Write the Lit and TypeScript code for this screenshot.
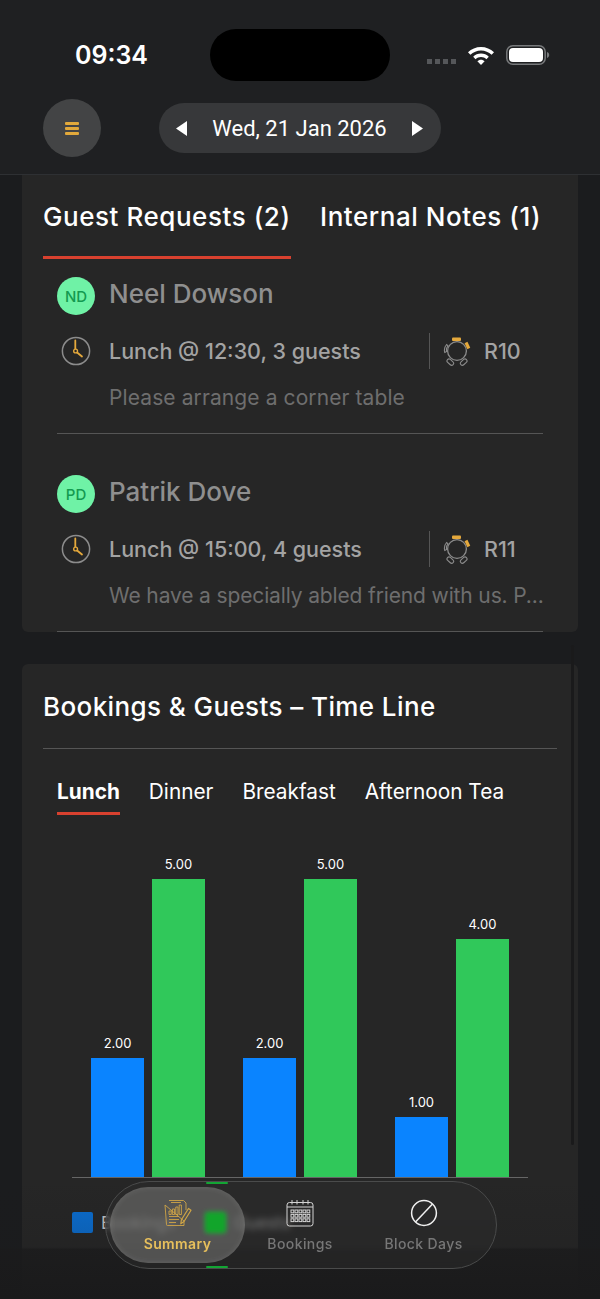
import { LitElement, html, css, svg } from 'lit';
import { customElement } from 'lit/decorators.js';

const requests = [
    { initials: 'ND', name: 'Neel Dowson', meal: 'Lunch @ 12:30, 3 guests', table: 'R10', note: 'Please arrange a corner table' },
    { initials: 'PD', name: 'Patrik Dove', meal: 'Lunch @ 15:00, 4 guests', table: 'R11', note: 'We have a specially abled friend with us. P...' },
];

const chart = [
    { bookings: 2, guests: 5 },
    { bookings: 2, guests: 5 },
    { bookings: 1, guests: 4 },
];

const unit = 59.6;

const clockIcon = svg`
    <svg width="30" height="30" viewBox="0 0 30 30" fill="none">
        <circle cx="15" cy="15" r="13.6" stroke="#8c8c8c" stroke-width="1.5"/>
        <path d="M14.3 4.5V15L21 20.5" stroke="#e5a93c" stroke-width="1.8" stroke-linecap="round"/>
        <circle cx="14.6" cy="15" r="1.9" stroke="#e5a93c" stroke-width="1.4" fill="#262626"/>
    </svg>`;

const tableIcon = svg`
    <svg width="28" height="30" viewBox="0 0 28 30" fill="none">
        <circle cx="14" cy="15" r="9.4" stroke="#8c8c8c" stroke-width="1.3"/>
        <rect x="9" y="1.5" width="9" height="3.4" rx="1" fill="#e5a93c"/>
        <path d="M23 6.5L25.8 12.5" stroke="#e5a93c" stroke-width="3.2"/>
        <path d="M3.6 8.5C1.4 11 1 14 1.8 16.5L3.6 15.5C3.2 13.5 3.6 11.5 5 9.8Z" stroke="#8c8c8c" stroke-width="1.1"/>
        <rect x="5.2" y="22.4" width="4" height="7.5" rx="2" transform="rotate(-48 7.2 26)" stroke="#8c8c8c" stroke-width="1.1"/>
        <rect x="18.8" y="22.4" width="4" height="7.5" rx="2" transform="rotate(48 20.8 26)" stroke="#8c8c8c" stroke-width="1.1"/>
    </svg>`;

const summaryIcon = svg`
    <svg width="28" height="28" viewBox="0 0 28 28" fill="none" stroke="#cfa547" stroke-width="0.9" stroke-linejoin="round">
        <path d="M5 1.5H19.5L22 4V11M20 22V26.5H3.5Q2.5 26.5 2.5 25.5L1 6Z"/>
        <path d="M7 3.5H17M5 17.5H15M5 20.5H15M5 23.5H12"/>
        <rect x="5" y="12" width="2.2" height="3.5"/>
        <rect x="8.4" y="10" width="2.2" height="5.5"/>
        <rect x="11.8" y="8" width="2.2" height="7.5"/>
        <rect x="15.2" y="6" width="2.2" height="9.5"/>
        <path d="M24.5 9.5L27 11.2L20 22.5L16.8 24.8L17.4 20.8Z" stroke-width="1.2"/>
    </svg>`;

const calendarIcon = svg`
    <svg width="28" height="28" viewBox="0 0 28 28" fill="none" stroke="#d4d4d4" stroke-width="1">
        <rect x="1" y="3.5" width="26" height="23.5" rx="2.5"/>
        <path d="M1 8H27M6 1V5.5M11 1V5.5M17 1V5.5M22 1V5.5"/>
        ${[11, 15.4, 19.8].map(y => [5, 9, 13, 17, 21].map(x => svg`<rect x=${x} y=${y} width="2.8" height="2.8"/>`))}
    </svg>`;

const blockIcon = svg`
    <svg width="28" height="28" viewBox="0 0 28 28" fill="none" stroke="#f0f0f0" stroke-width="1.5">
        <circle cx="14" cy="14" r="12.4"/>
        <path d="M5.5 23L22.5 5"/>
    </svg>`;

@customElement('app-root')
export class AppRoot extends LitElement {

    static styles = css`
        :host {
            background-color: #1b1c1e;
            color: #fff;
            display: block;
            font-family: Inter, 'Liberation Sans', sans-serif;
            height: 1299px;
            overflow: hidden;
            position: relative;
            width: 600px;
        }

        .header {
            background-color: #1f2022;
            border-bottom: 1px solid #2e3033;
            box-sizing: border-box;
            height: 175px;
            position: relative;
        }

        .status {
            align-items: center;
            box-sizing: border-box;
            display: flex;
            height: 99px;
            padding-top: 11px;
            position: relative;
        }

        .time {
            font-size: 25px;
            font-weight: 600;
            margin-left: 75px;
        }

        .island {
            background-color: #000;
            border-radius: 26px;
            height: 52px;
            left: 210px;
            position: absolute;
            top: 29px;
            width: 180px;
        }

        .status-icons {
            align-items: center;
            display: flex;
            margin-left: auto;
            margin-right: 49px;
        }

        .signal {
            display: flex;
            gap: 3px;
            margin-right: 11px;
            margin-top: 12px;
        }

        .signal i {
            background-color: #55575a;
            height: 5px;
            width: 5px;
        }

        .battery {
            margin-left: 11px;
        }

        .toolbar {
            align-items: center;
            display: flex;
            padding-left: 43px;
        }

        .menu {
            align-items: center;
            background-color: #434445;
            border-radius: 50%;
            display: flex;
            flex-direction: column;
            gap: 2px;
            height: 58px;
            justify-content: center;
            width: 58px;
        }

        .menu i {
            background-color: #e2a93b;
            border-radius: 1px;
            height: 3px;
            width: 14px;
        }

        .date {
            align-items: center;
            background-color: #37383a;
            border-radius: 25px;
            box-sizing: border-box;
            display: flex;
            font-family: Roboto, sans-serif;
            font-size: 22px;
            height: 50px;
            justify-content: space-between;
            margin-left: 58px;
            padding: 0 18px 0 17px;
            width: 282px;
        }

        .main {
            display: flex;
            flex-direction: column;
            gap: 32px;
            padding: 0 22px;
        }

        .card {
            background-color: #262626;
            border-radius: 0 0 6px 6px;
        }

        .requests {
            box-sizing: border-box;
            height: 457px;
            padding: 0 35px;
        }

        .tabs {
            display: flex;
            font-size: 26px;
            font-weight: 500;
            height: 84px;
            letter-spacing: 0.55px;
            margin: 0 -14px 0 -14px;
        }

        .tab {
            box-sizing: border-box;
            line-height: 83px;
            white-space: nowrap;
        }

        .tab.active {
            border-bottom: 3px solid #d8412f;
            width: 248px;
        }

        .tab.other {
            margin-left: 29px;
        }

        .request {
            border-bottom: 1px solid #555;
            box-sizing: border-box;
            height: 175px;
            margin-bottom: 23px;
            padding-top: 18px;
        }

        .request:last-child .note {
            letter-spacing: -0.14px;
        }

        .name-row {
            align-items: center;
            color: #8f8f8f;
            display: flex;
            font-size: 26px;
            font-weight: 500;
            gap: 14px;
            height: 38px;
        }

        .name-row span {
            position: relative;
            top: -3px;
        }

        .avatar {
            align-items: center;
            background-color: #6ff2a6;
            border-radius: 50%;
            color: #139a50;
            display: flex;
            font-size: 15px;
            font-weight: 500;
            height: 38px;
            justify-content: center;
            width: 38px;
        }

        .meal-row {
            align-items: center;
            color: #a3a3a3;
            display: flex;
            font-size: 21.5px;
            font-weight: 500;
            height: 38px;
            margin-top: 17px;
        }

        .clock {
            display: flex;
            margin: 0 18px 0 4px;
        }

        .meal {
            width: 320px;
        }

        .table {
            align-items: center;
            border-left: 1px solid #555;
            display: flex;
            gap: 13px;
            height: 36px;
            padding-left: 13px;
        }

        .table svg {
            display: block;
        }

        .note {
            color: #6e6e6e;
            font-size: 21px;
            font-weight: 400;
            letter-spacing: 0.1px;
            margin-top: 15px;
            padding-left: 52px;
            white-space: nowrap;
        }

        .timeline {
            border-radius: 6px 6px 0 0;
            height: 640px;
            padding: 0 21px;
        }

        .title {
            border-bottom: 1px solid #555;
            font-size: 26px;
            font-weight: 500;
            height: 84px;
            letter-spacing: 0.4px;
            line-height: 86px;
        }

        .meals {
            display: flex;
            font-size: 20.8px;
            gap: 29px;
            margin-top: 27px;
            padding-left: 14px;
        }

        .meals span {
            box-sizing: border-box;
            height: 39px;
            line-height: 32px;
        }

        .meals .active {
            border-bottom: 3px solid #d8412f;
            font-weight: 700;
        }

        .chart {
            align-items: flex-end;
            border-bottom: 1px solid #666;
            box-sizing: border-box;
            display: grid;
            grid-template-columns: repeat(3, 152px);
            height: 363px;
            margin: 0 8px 0 29px;
            width: 456px;
        }

        .group {
            display: flex;
            gap: 8px;
            justify-content: center;
        }

        .bar {
            align-items: center;
            display: flex;
            flex-direction: column;
            font-size: 13px;
            justify-content: flex-end;
            width: 53px;
        }

        .bar b {
            font-weight: 400;
            line-height: 16px;
            margin-bottom: 7px;
        }

        .bar i {
            display: block;
            width: 100%;
        }

        .bar.bookings i {
            background-color: #0a84ff;
        }

        .bar.guests i {
            background-color: #30c85a;
        }

        .legend {
            align-items: center;
            display: flex;
            font-size: 17px;
            margin: 34px 0 0 29px;
        }

        .legend i {
            border-radius: 2px;
            height: 21px;
            margin-right: 8px;
            width: 21px;
        }

        .legend .blue {
            background-color: #0a6fd4;
        }

        .legend .green {
            background-color: #13b534;
            margin-left: 30px;
        }

        .legend span {
            color: #c8c8c8;
        }

        .shade {
            background: linear-gradient(to bottom, rgba(27, 27, 28, 0), rgba(27, 27, 28, 0.2) 56%, rgba(27, 27, 28, 0.85) 58%, #1a1a1b);
            bottom: 0;
            height: 118px;
            left: 0;
            pointer-events: none;
            position: absolute;
            right: 0;
        }

        .scrollbar {
            background-color: #1a1a1b;
            border-radius: 2px;
            height: 500px;
            left: 571px;
            position: absolute;
            top: 645px;
            width: 3px;
        }

        .nav {
            backdrop-filter: blur(3px);
            background-color: rgba(46, 46, 47, 0.45);
            border: 1px solid #4a4b4b;
            border-radius: 44px;
            box-sizing: border-box;
            display: grid;
            grid-template-columns: 135px 110px 137px;
            height: 88px;
            left: 105px;
            padding: 5px 4px;
            position: absolute;
            top: 1181px;
            width: 392px;
        }

        .nav-item {
            align-items: center;
            color: #777;
            display: flex;
            flex-direction: column;
            font-size: 14px;
            font-weight: 500;
            gap: 8px;
            justify-content: center;
            letter-spacing: 0.4px;
            position: relative;
        }

        .nav-item svg {
            display: block;
        }

        .nav-item.active {
            background-color: rgba(120, 120, 118, 0.55);
            border-radius: 39px;
            box-shadow: inset 0 0 6px rgba(255, 255, 255, 0.12);
            color: #e8c05c;
            font-weight: 600;
        }

        .blob {
            background-color: #12a52b;
            border-radius: 3px;
            filter: blur(2px);
            height: 21px;
            left: 95px;
            position: absolute;
            top: 25px;
            width: 21px;
        }

        .glint {
            background-color: #13a534;
            border-radius: 1px;
            height: 2px;
            left: 100px;
            position: absolute;
            width: 22px;
        }

        .glint.top {
            top: 0;
        }

        .glint.bottom {
            bottom: 0;
        }
    `;

    renderRequest(request: typeof requests[number]) {
        return html`
            <div class="request">
                <div class="name-row">
                    <div class="avatar">${request.initials}</div>
                    <span>${request.name}</span>
                </div>
                <div class="meal-row">
                    <div class="clock">${clockIcon}</div>
                    <div class="meal">${request.meal}</div>
                    <div class="table">${tableIcon}<span>${request.table}</span></div>
                </div>
                <div class="note">${request.note}</div>
            </div>
        `;
    }

    renderBar(type: string, value: number) {
        return html`
            <div class="bar ${type}">
                <b>${value.toFixed(2)}</b>
                <i style="height: ${value * unit}px"></i>
            </div>
        `;
    }

    render() {
        return html`
            <div class="header">
                <div class="status">
                    <div class="time">09:34</div>
                    <div class="island"></div>
                    <div class="status-icons">
                        <div class="signal"><i></i><i></i><i></i><i></i></div>
                        <svg width="28" height="22" viewBox="0 0 28 22" fill="#fff">
                            <path d="M14 3C19 3 23.6 5 27 8.2L24.6 10.8C21.8 8.2 18 6.6 14 6.6C10 6.6 6.2 8.2 3.4 10.8L1 8.2C4.4 5 9 3 14 3Z"/>
                            <path d="M14 9.6C17 9.6 19.8 10.8 21.8 12.7L19.4 15.2C18 13.9 16.1 13.1 14 13.1C11.9 13.1 10 13.9 8.6 15.2L6.2 12.7C8.2 10.8 11 9.6 14 9.6Z"/>
                            <path d="M14 15.8C15.4 15.8 16.7 16.4 17.6 17.3L14 21L10.4 17.3C11.3 16.4 12.6 15.8 14 15.8Z"/>
                        </svg>
                        <svg class="battery" width="45" height="20" viewBox="0 0 45 20" fill="none">
                            <rect x="0.8" y="0.8" width="38.4" height="18.4" rx="6" stroke="#77797b" stroke-width="1.5"/>
                            <rect x="3" y="3" width="34" height="14" rx="4" fill="#fff"/>
                            <path d="M41 7V13C42.4 12.6 43.2 11.4 43.2 10C43.2 8.6 42.4 7.4 41 7Z" fill="#77797b"/>
                        </svg>
                    </div>
                </div>
                <div class="toolbar">
                    <div class="menu"><i></i><i></i><i></i></div>
                    <div class="date">
                        <svg width="12" height="15" viewBox="0 0 12 15" fill="#fff"><path d="M11 0V15L0 7.5Z"/></svg>
                        <span>Wed, 21 Jan 2026</span>
                        <svg width="12" height="15" viewBox="0 0 12 15" fill="#fff"><path d="M1 0V15L12 7.5Z"/></svg>
                    </div>
                </div>
            </div>

            <div class="main">
                <div class="card requests">
                    <div class="tabs">
                        <div class="tab active">Guest Requests (2)</div>
                        <div class="tab other">Internal Notes (1)</div>
                    </div>
                    ${requests.map(request => this.renderRequest(request))}
                </div>

                <div class="card timeline">
                    <div class="title">Bookings &amp; Guests – Time Line</div>
                    <div class="meals">
                        <span class="active">Lunch</span>
                        <span>Dinner</span>
                        <span>Breakfast</span>
                        <span>Afternoon Tea</span>
                    </div>
                    <div class="chart">
                        ${chart.map(item => html`
                            <div class="group">
                                ${this.renderBar('bookings', item.bookings)}
                                ${this.renderBar('guests', item.guests)}
                            </div>
                        `)}
                    </div>
                    <div class="legend">
                        <i class="blue"></i><span>Bookings</span>
                        <i class="green"></i><span>Guests</span>
                    </div>
                </div>
            </div>

            <div class="scrollbar"></div>
            <div class="shade"></div>

            <div class="nav">
                <i class="glint top"></i>
                <i class="glint bottom"></i>
                <div class="nav-item active"><i class="blob"></i>${summaryIcon}<span>Summary</span></div>
                <div class="nav-item">${calendarIcon}<span>Bookings</span></div>
                <div class="nav-item">${blockIcon}<span>Block Days</span></div>
            </div>
        `;
    }
}
